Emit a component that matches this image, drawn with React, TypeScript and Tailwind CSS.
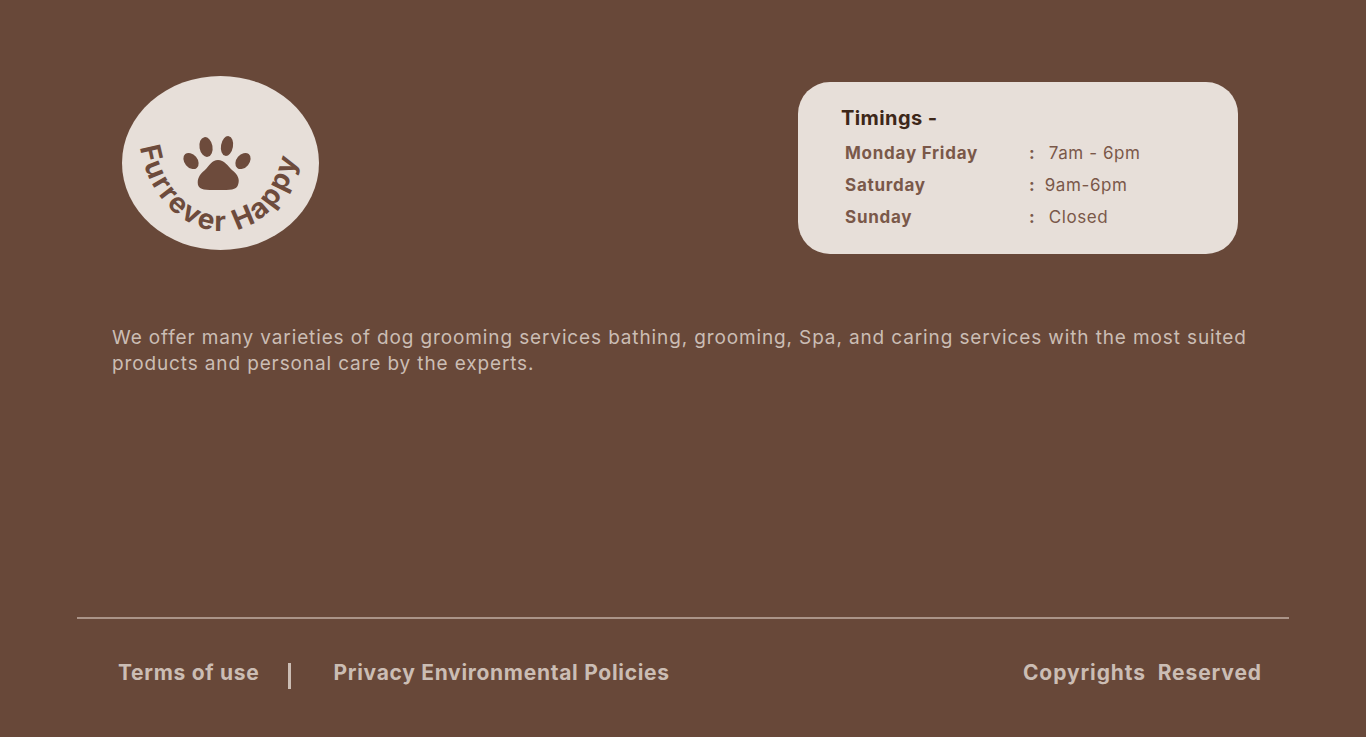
const font = "font-['Inter',sans-serif]";

const rows = [
  { day: "Monday Friday", time: "7am - 6pm", indent: "pl-[14px]" },
  { day: "Saturday", time: "9am-6pm", indent: "pl-[10px]" },
  { day: "Sunday", time: "Closed", indent: "pl-[14px]" },
];

function Logo() {
  return (
    <div className="w-[197px] h-[174px] rounded-[50%] bg-[#e7dfd9] shrink-0">
      <svg width="197" height="174" viewBox="0 0 197 174">
        <defs>
          <path id="logo-arc" d="M 18 71 C 26 122, 62 155, 100 155 C 138 155, 170 125, 180 62" fill="none" />
        </defs>
        <text fontFamily="Inter, sans-serif" fontSize="28" fontWeight="700" fill="#6d4b3c" letterSpacing="2.2">
          <textPath href="#logo-arc">Furrever Happy</textPath>
        </text>
        <g fill="#6d4b3c">
          <ellipse cx="84" cy="71" rx="6.5" ry="10" transform="rotate(-10 84 71)" />
          <ellipse cx="105" cy="70" rx="6" ry="10" transform="rotate(10 105 70)" />
          <ellipse cx="69" cy="85" rx="6.5" ry="9" transform="rotate(-40 69 85)" />
          <ellipse cx="121" cy="85" rx="6.5" ry="9" transform="rotate(40 121 85)" />
          <path d="M96 84 C102 84 106 90 110 94 C116 99 118 103 116 109 C114 114 109 114 96 114 C83 114 78 114 76 109 C75 103 77 99 83 94 C87 90 90 84 96 84 Z" />
        </g>
      </svg>
    </div>
  );
}

export default function App() {
  return (
    <div className={`${font} w-full h-[737px] bg-[#684839] flex flex-col overflow-hidden`}>
      <div className="flex justify-between items-start pt-[76px] pl-[122px] pr-[128px]">
        <Logo />
        <div className="mt-[6px] w-[440px] h-[172px] rounded-[32px] bg-[#e7dfd9] pt-[24px] pl-[43px]">
          <h3 className="text-[20px] leading-[24px] font-bold tracking-[0.4px] text-[#3d2719]">Timings -</h3>
          <div className="mt-[8px] pl-[4px] flex flex-col">
            {rows.map((r) => (
              <div key={r.day} className="flex items-center h-[32px] text-[17px] text-[#7a5849]">
                <span className="w-[184px] font-bold tracking-[0.75px]">{r.day}</span>
                <span className="font-bold">:</span>
                <span className={`${r.indent} tracking-[0.6px]`}>{r.time}</span>
              </div>
            ))}
          </div>
        </div>
      </div>

      <p className="mt-[71px] px-[112px] text-[19px] leading-[26px] tracking-[0.87px] text-[#cbbdb4]">
        We offer many varieties of dog grooming services bathing, grooming, Spa, and caring services with the most suited products and personal care by the experts.
      </p>

      <div className="mt-auto mx-[77px] flex flex-col">
        <div className="h-[2px] bg-[#ab9488]" />
        <div className="h-[118px] pb-[10px] flex items-center justify-between pl-[41px] pr-[27px] text-[21px] font-bold tracking-[0.7px] text-[#cbbdb4]">
          <div className="flex items-center">
            <span>Terms of use</span>
            <span className="ml-[29px] mr-[42px] w-[3px] h-[26px] mt-[6px] bg-[#cbbdb4]" />
            <span>Privacy Environmental Policies</span>
          </div>
          <span className="tracking-[0.9px]">Copyrights&nbsp; Reserved</span>
        </div>
      </div>
    </div>
  );
}
